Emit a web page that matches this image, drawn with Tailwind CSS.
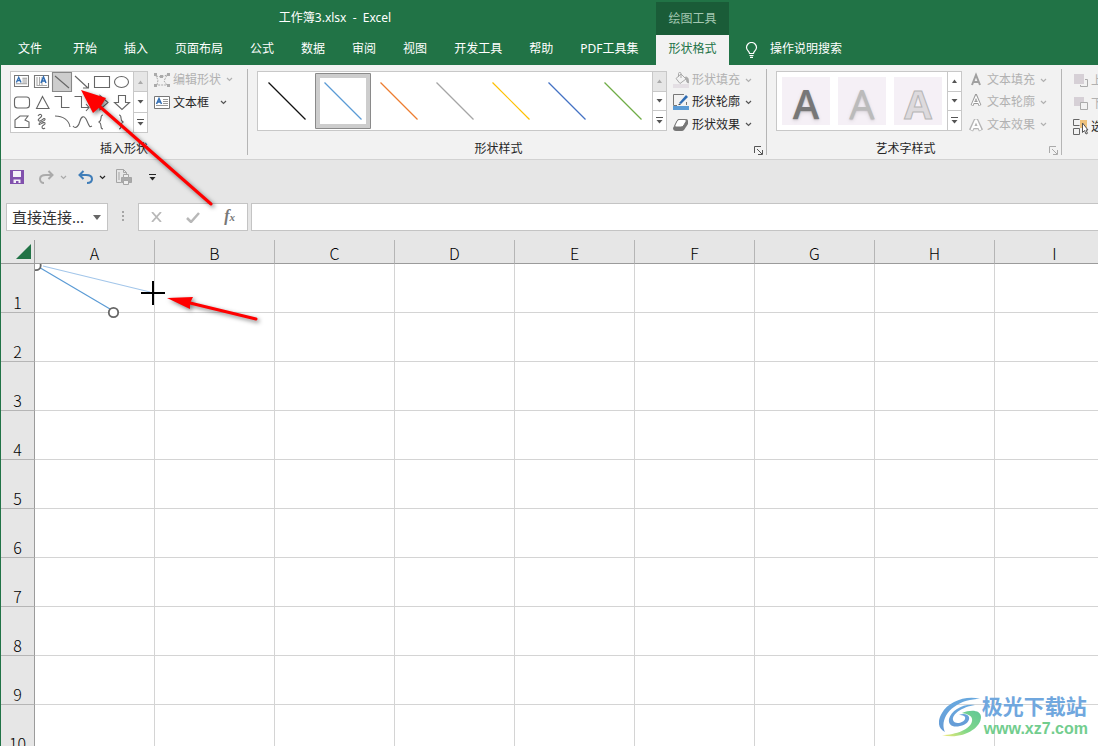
<!DOCTYPE html>
<html lang="zh-CN">
<head>
<meta charset="utf-8">
<meta name="viewport" content="width=device-width, initial-scale=1">
<title>工作簿3.xlsx - Excel</title>
<script src="https://cdn.jsdelivr.net/npm/@tailwindcss/browser@4"></script>
</head>
<body class="relative flex h-screen flex-col overflow-hidden border-l border-[#217346] bg-[#e6e6e6] font-['Noto_Sans','Noto_Sans_CJK_SC',sans-serif] text-xs text-[#262626]">

<!-- shared icons -->
<svg class="hidden" aria-hidden="true">
  <symbol id="chev" viewBox="0 0 7 5"><path d="M1 1l2.500 2.500L6 1" fill="none" stroke="currentColor" stroke-width="1.200"/></symbol>
  <symbol id="up" viewBox="0 0 7 4"><path d="M1 4l2.500-3.500L6 4z" fill="currentColor"/></symbol>
  <symbol id="down" viewBox="0 0 7 4"><path d="M.5 0h6L3.500 3.500z" fill="currentColor"/></symbol>
  <symbol id="more" viewBox="0 0 7 7"><path d="M0 .5h7" stroke="currentColor"/><path d="M.5 3h6L3.500 6.500z" fill="currentColor"/></symbol>
  <symbol id="launch" viewBox="0 0 9 9"><path d="M.5 7V.5H7M3 3l5 5M8.500 4v4.500H4" fill="none" stroke="currentColor"/></symbol>
  <symbol id="textbox" viewBox="0 0 16 14"><path d="M.5 .5h15v12H.5z" fill="#fff" stroke="#777"/><path d="M9 3.500h5M9 5.500h5M9 7.500h5M2 9.500h12" stroke="#999"/><path d="M2.500 8L5 2.500 7.500 8M3.500 6h3" fill="none" stroke="#2f6cb3" stroke-width="1.500"/></symbol>
</svg>

<header class="-ml-px flex h-[65px] shrink-0 bg-[#217346] text-white">
  <div class="flex w-[656px] shrink-0 flex-col">
    <div class="flex h-[35px] items-center justify-center pl-[14px]"><h1 class="whitespace-pre">工作簿3.xlsx  -  Excel</h1></div>
    <nav class="flex h-[28px] items-center gap-[27px] pl-[18px] whitespace-nowrap">
      <button class="mr-1">文件</button><button>开始</button><button>插入</button><button>页面布局</button><button>公式</button><button>数据</button><button>审阅</button><button>视图</button><button>开发工具</button><button>帮助</button><button>PDF工具集</button>
    </nav>
  </div>
  <div class="flex w-[73px] shrink-0 flex-col pt-[2px] text-center">
    <div class="flex h-[33px] items-center justify-center bg-[#1a5c38] text-[#a3c7b2]">绘图工具</div>
    <button class="flex h-[30px] items-center justify-center bg-[#f2f2f2] pb-[2px] text-[#217346]">形状格式</button>
  </div>
  <button class="mt-[35px] ml-4 flex h-[28px] items-center gap-3 whitespace-nowrap">
    <svg class="mt-[2px] h-4 w-[13px]" viewBox="0 0 13 16" fill="none" stroke="#fff" stroke-width="1.200"><path d="M4.500 11.500C4.500 9 1.500 8.500 1.500 5.500a5 5 0 0 1 10 0C11.500 8.500 8.500 9 8.500 11.500zM4.500 13.500h4M5 15.400h3"/></svg>
    操作说明搜索
  </button>
</header>

<section aria-label="形状格式" class="flex h-[95px] shrink-0 overflow-hidden border-b border-[#d2d2d2] bg-[#f2f2f2] pt-1 whitespace-nowrap">
  <!-- insert shapes -->
  <div class="flex h-[86px] w-[247px] shrink-0 flex-col border-r border-[#b5b5b5] pt-[2px] pl-[9px]">
    <div class="flex h-[62px] gap-[6px]">
      <div class="flex w-[138px] border border-[#c8c8c8] bg-white">
        <svg class="h-[60px] w-[122px] shrink-0" viewBox="0 0 122 60" fill="none" stroke="#666" stroke-width="1.100">
          <use href="#textbox" x="3" y="3" width="15" height="13"/>
          <path d="M23.500 3.500h14v12h-14z" stroke="#777"/><path d="M26 5v9M28.500 5v9M31 5v9M26 13.500h10" stroke="#aaa"/><path d="M30 11l2.500-6 2.500 6M31 9h3" stroke="#2f6cb3" stroke-width="1.500"/>
          <path d="M41.500.5h19v19h-19z" fill="#cdcdcd" stroke="#888"/><path d="M44 4l14 12M64 4l13 12M77.500 11v5H72M83.500 4.500h15v11h-15z"/>
          <ellipse cx="110.500" cy="10" rx="7" ry="5.500"/>
          <rect x="3.500" y="25" width="15" height="11" rx="3"/><path d="M31.500 24.500L38 36.500H25.500zM43.500 24.500h7v11h8M63.500 24.500h7v11h8M75 32l3 3.500-3 3.500M83 27.500h6v-4l8 7-8 7v-4h-6zM107.500 23.500h7v7h4l-7.500 7-7.500-7h4z"/>
          <path d="M4 55.500V48l5-4h8l-3 4 4 2v5.500zM27 44c2-3 5-1 3 1s-4 3-2 4 5-4 6-2-6 3-6 5 5-3 6-1-3 2-3 4 2 2 3 1M44 44c8 0 14 4 15 11M62 54c3 4 6-1 7-5s4-7 7 0 3 6 5 5M92 43c-2 0-2 1-2 3s0 3-2 4c2 1 2 2 2 4s0 3 2 3M108 43c2 0 2 1 2 3s0 3 2 4c-2 1-2 2-2 4s0 3-2 3"/>
        </svg>
        <div class="flex w-[14px] shrink-0 flex-col divide-y divide-[#c8c8c8] border-l border-[#c8c8c8] text-[#555]">
          <button aria-label="上移" class="flex flex-1 items-center justify-center bg-[#e6e6e6] text-[#aaa]"><svg class="h-1 w-[7px]"><use href="#up"/></svg></button>
          <button aria-label="下移" class="flex flex-1 items-center justify-center"><svg class="h-1 w-[7px]"><use href="#down"/></svg></button>
          <button aria-label="更多" class="flex flex-1 items-center justify-center"><svg class="h-[7px] w-[7px]"><use href="#more"/></svg></button>
        </div>
      </div>
      <div class="flex flex-col gap-[6px]">
        <button class="flex h-[17px] items-center gap-[3px] text-[#b1b1b1]"><svg class="h-[14px] w-4" viewBox="0 0 16 14" fill="none" stroke="#aaa"><path d="M2 3l5 1 6-2-3 6 3 4H3l1-5z" stroke-dasharray="2 1"/><path d="M0 0h3v3H0zM6 2h3v3H6zM13 0h3v3h-3zM0 11h3v3H0zM13 11h3v3h-3z" fill="#aaa" stroke="none"/></svg>编辑形状<svg class="ml-[2px] h-[5px] w-[7px]"><use href="#chev"/></svg></button>
        <button class="flex h-[17px] items-center gap-[3px]"><svg class="h-[14px] w-4"><use href="#textbox"/></svg>文本框<svg class="ml-2 h-[5px] w-[7px] text-[#555]"><use href="#chev"/></svg></button>
      </div>
    </div>
    <div class="flex h-[22px] items-center justify-center pt-[9px] pr-[9px]">插入形状</div>
  </div>

  <!-- shape styles -->
  <div class="flex h-[86px] w-[519px] shrink-0 flex-col border-r border-[#b5b5b5] pt-[2px] pl-[9px]">
    <div class="flex h-[62px] gap-[6px]">
      <div class="flex h-[60px] w-[410px] border border-[#c8c8c8] bg-white">
        <svg class="h-[58px] w-[394px] shrink-0" viewBox="0 0 394 58" fill="none" stroke-width="1.200">
          <path d="M60 4h50v50H60z" stroke="#cdcdcd" stroke-width="4"/><path d="M57.500 1.500h55v55h-55z" stroke="#8a8a8a" stroke-width="1"/>
          <path d="M10.500 10.500l37 37" stroke="#111"/><path d="M66.500 10.500l37 37" stroke="#5b9bd5"/><path d="M122.500 10.500l37 37" stroke="#ed7d31"/><path d="M178.500 10.500l37 37" stroke="#a5a5a5"/><path d="M234.500 10.500l37 37" stroke="#ffc000"/><path d="M290.500 10.500l37 37" stroke="#4472c4"/><path d="M346.500 10.500l37 37" stroke="#70ad47"/>
        </svg>
        <div class="flex w-[14px] shrink-0 flex-col divide-y divide-[#c8c8c8] border-l border-[#c8c8c8] text-[#555]">
          <button aria-label="上移" class="flex flex-1 items-center justify-center bg-[#e6e6e6] text-[#aaa]"><svg class="h-1 w-[7px]"><use href="#up"/></svg></button>
          <button aria-label="下移" class="flex flex-1 items-center justify-center"><svg class="h-1 w-[7px]"><use href="#down"/></svg></button>
          <button aria-label="更多" class="flex flex-1 items-center justify-center"><svg class="h-[7px] w-[7px]"><use href="#more"/></svg></button>
        </div>
      </div>
      <div class="flex flex-col gap-[6px] pt-px">
        <button class="flex h-[17px] items-center gap-[3px] text-[#b1b1b1]"><svg class="h-4 w-4" viewBox="0 0 16 16" fill="none" stroke="#aaa"><path d="M8 2l5 5-6 4.500-4-5zM5.500 5V1.500C5.500 0 8 0 8 1.500V6"/><path d="M12.500 5c3 0 3 3 3 6-2 0-2-3-2-3z" fill="#aaa"/><path d="M0 12h16v4H0z" fill="#e4dfe4" stroke="none"/></svg>形状填充<svg class="ml-[2px] h-[5px] w-[7px]"><use href="#chev"/></svg></button>
        <button class="flex h-[17px] items-center gap-[3px]"><svg class="h-4 w-4" viewBox="0 0 16 16" fill="none"><path d="M11 .5H.5v11H4M13.500 8v3" stroke="#777"/><path d="M6 9l7-8 2 2-7 7z" fill="#2f6cb3"/><path d="M5 11l1.500-1.500L8 11z" fill="#444"/><path d="M0 12h16v4H0z" fill="#5b9bd5"/></svg>形状轮廓<svg class="ml-[2px] h-[5px] w-[7px] text-[#555]"><use href="#chev"/></svg></button>
        <button class="flex h-[17px] items-center gap-[3px]"><svg class="h-4 w-4" viewBox="0 0 16 16"><path d="M5 2h8q2 0 2 2v3l-4 6q-1 1-2 1H3q-3 0-3-3z" fill="#777"/><path d="M6 2.500h6q2 0 1 2L11 8q-1 2-3 2H3Q1 10 2 8l2-4q1-1.500 2-1.500z" fill="#fff" stroke="#777"/></svg>形状效果<svg class="ml-[2px] h-[5px] w-[7px] text-[#555]"><use href="#chev"/></svg></button>
      </div>
    </div>
    <div class="flex h-[22px] items-center pt-[9px] pr-[3px]"><span class="flex-1 pr-[14px] text-center">形状样式</span><button aria-label="形状样式选项"><svg class="mt-1 h-[9px] w-[9px] text-[#555]"><use href="#launch"/></svg></button></div>
  </div>

  <!-- WordArt styles -->
  <div class="flex h-[86px] w-[295px] shrink-0 flex-col border-r border-[#b5b5b5] pt-[2px] pl-[9px]">
    <div class="flex h-[62px] gap-[6px]">
      <div class="flex h-[60px] w-[186px] border border-[#c8c8c8] bg-white">
        <div class="flex w-[170px] shrink-0 items-center gap-2 pl-[5px] font-['Open_Sans',sans-serif] text-[40px] leading-[48px]">
          <button class="h-12 w-12 bg-[#f5f0f6] pt-[3px] font-semibold text-[#777] text-shadow-md">A</button>
          <button class="h-12 w-12 bg-[#f5f0f6] pt-[3px] text-[#bbb] text-shadow-md">A</button>
          <button class="h-12 w-12 bg-[#f5f0f6] pt-[3px] font-bold text-[#dddadd] [-webkit-text-stroke:1px_#b5b5b5]">A</button>
        </div>
        <div class="flex w-[14px] shrink-0 flex-col divide-y divide-[#c8c8c8] border-l border-[#c8c8c8] text-[#555]">
          <button aria-label="上移" class="flex flex-1 items-center justify-center"><svg class="h-1 w-[7px]"><use href="#up"/></svg></button>
          <button aria-label="下移" class="flex flex-1 items-center justify-center"><svg class="h-1 w-[7px]"><use href="#down"/></svg></button>
          <button aria-label="更多" class="flex flex-1 items-center justify-center"><svg class="h-[7px] w-[7px]"><use href="#more"/></svg></button>
        </div>
      </div>
      <div class="flex flex-col gap-[6px] pt-px text-[#b1b1b1]">
        <button class="flex h-[17px] items-center gap-[3px]"><svg class="h-4 w-4" viewBox="0 0 16 16"><path d="M4 13L8 3l4 10M5.500 10h5" fill="none" stroke="#a0a0a0" stroke-width="2"/></svg>文本填充<svg class="ml-[2px] h-[5px] w-[7px]"><use href="#chev"/></svg></button>
        <button class="flex h-[17px] items-center gap-[3px]"><svg class="h-4 w-4" viewBox="0 0 16 16"><path d="M4 11.500L8 2l4 9.500M5.500 8.500h5" fill="none" stroke="#999" stroke-width="3"/><path d="M4.200 11L8 2.500l3.800 8.500M5.500 8.500h5" fill="none" stroke="#fff" stroke-width="1.200"/></svg>文本轮廓<svg class="ml-[2px] h-[5px] w-[7px]"><use href="#chev"/></svg></button>
        <button class="flex h-[17px] items-center gap-[3px]"><svg class="h-4 w-4" viewBox="0 0 16 16" stroke-linejoin="bevel"><path d="M3 13.500L8 3l5 10.500M5.500 10h5" fill="none" stroke="#b5b5b5" stroke-width="4.500"/><path d="M3.500 13L8 3l4.500 10M5.500 10h5" fill="none" stroke="#fff" stroke-width="2"/></svg>文本效果<svg class="ml-[2px] h-[5px] w-[7px]"><use href="#chev"/></svg></button>
      </div>
    </div>
    <div class="flex h-[22px] items-center pt-[9px] pr-[3px]"><span class="flex-1 pr-[14px] text-center">艺术字样式</span><button aria-label="艺术字样式选项"><svg class="mt-1 h-[9px] w-[9px] text-[#aaa]"><use href="#launch"/></svg></button></div>
  </div>

  <!-- arrange -->
  <div class="flex shrink-0 flex-col gap-[6px] pt-[3px] pl-[11px]">
    <button class="flex h-[17px] items-center gap-[2px] text-[#b1b1b1]"><svg class="h-4 w-4" viewBox="0 0 16 16"><path d="M1 1h10v10H1z" fill="#d6d0d6"/><path d="M12 6.500h2.500v7h-7V12" fill="none" stroke="#aaa"/></svg>上移一层</button>
    <button class="flex h-[17px] items-center gap-[2px] text-[#b1b1b1]"><svg class="h-4 w-4" viewBox="0 0 16 16"><path d="M1 1h10v9H1z" fill="#d6d0d6"/><path d="M7.500 6.500h7v7h-7z" fill="#f2f2f2" stroke="#aaa"/></svg>下移一层</button>
    <button class="flex h-[17px] items-center gap-[2px]"><svg class="h-4 w-4" viewBox="0 0 16 16"><path d="M7 1h7v8H7z" fill="#efc27c"/><path d="M6.500.5h-6v6h6M.5 9.500h6v6h-6z" fill="none" stroke="#666"/><path d="M9.500 4v9.500l2-2 1.500 3.500 1.500-.7-1.500-3.300H15z" fill="#fff" stroke="#555"/></svg>选择窗格</button>
  </div>
</section>

<!-- quick access toolbar -->
<div class="flex h-[34px] shrink-0 items-center pl-[9px]">
  <button aria-label="保存"><svg class="h-[14px] w-[14px]" viewBox="0 0 14 14"><path d="M0 0h14v14H0z" fill="#8151ad"/><path d="M3 1h8v6H3zM3.500 9.500h7V13h-2v-2H6v2H3.500z" fill="#f4f0f8"/></svg></button>
  <button aria-label="恢复" class="ml-[15px] flex items-center gap-[6px] text-[#aaa]"><svg class="h-[14px] w-[15px]" viewBox="0 0 15 14" fill="none" stroke="currentColor" stroke-width="2"><path d="M13 5H7C3 5 1 7 1 9s1.500 4 4 4M9.500 1l4 4-4 4"/></svg><svg class="h-[5px] w-[7px]"><use href="#chev"/></svg></button>
  <button aria-label="撤消" class="ml-[11px] flex items-center gap-[6px]"><svg class="h-[14px] w-[15px] text-[#3f7db8]" viewBox="0 0 15 14" fill="none" stroke="currentColor" stroke-width="2"><path d="M2 5h6c4 0 6 2 6 4s-1.500 4-5 4M5.500 1l-4 4 4 4"/></svg><svg class="h-[5px] w-[7px]"><use href="#chev"/></svg></button>
  <button aria-label="打印预览" class="ml-[10px]"><svg class="h-4 w-[17px]" viewBox="0 0 17 16" fill="none" stroke="#a5a5a5"><path d="M5 13.500H.5V.5h7l3 3V5M7.500.5v3h3M3 3v8"/><path d="M5.500 8.500h10v5h-10z" fill="#aaa"/><path d="M7.500 5.500h5v3h-5zM7.500 11.500h5v4h-5z" fill="#eee"/></svg></button>
  <button aria-label="自定义快速访问工具栏" class="ml-4"><svg class="h-[7px] w-[7px]"><use href="#more"/></svg></button>
</div>

<!-- formula bar -->
<div class="mt-[9px] flex h-[28px] shrink-0">
  <div class="ml-[5px] flex w-[102px] items-center border border-[#c4c4c4] bg-white pr-[6px]">
    <input aria-label="名称框" value="直接连接..." class="w-full min-w-0 flex-1 bg-transparent pl-[5px] text-[15px] text-[#333] outline-none">
    <button aria-label="名称列表"><svg class="h-[5px] w-2 text-[#666]" viewBox="0 0 8 5"><path d="M0 0h8L4 5z" fill="currentColor"/></svg></button>
  </div>
  <svg class="mx-[14px] h-[28px] w-[2px]" viewBox="0 0 2 28"><path d="M0 8h2v2H0zM0 12h2v2H0zM0 16h2v2H0z" fill="#a5a5a5"/></svg>
  <div class="flex w-[110px] items-center justify-between border border-[#c4c4c4] bg-white px-3">
    <button aria-label="取消"><svg class="h-[10px] w-[11px]" viewBox="0 0 11 10"><path d="M1 0l9 10M10 0L1 10" stroke="#b8b8b8" stroke-width="1.800"/></svg></button>
    <button aria-label="输入"><svg class="h-[11px] w-[14px]" viewBox="0 0 14 11"><path d="M1 6l4 4 8-9" fill="none" stroke="#b8b8b8" stroke-width="2.500"/></svg></button>
    <button aria-label="插入函数" class="pb-[2px] font-['Liberation_Serif',serif] text-base leading-5 font-bold text-[#777] italic">f<span class="text-[11px]">x</span></button>
  </div>
  <input aria-label="编辑栏" class="ml-[3px] min-w-0 flex-1 border border-r-0 border-[#c4c4c4] bg-white outline-none">
</div>

<!-- worksheet -->
<main class="relative mt-[9px] flex-1 overflow-hidden bg-white">
  <table class="w-[1114px] table-fixed border-separate border-spacing-0 font-['Noto_Sans_CJK_SC',sans-serif] text-base leading-5 text-black">
    <thead>
      <tr id="columns" class="h-6 bg-[#e6e6e6]">
        <th class="h-6 w-[34px] border-r border-b border-[#9b9b9b] p-0"><button aria-label="全选" class="block pl-[15px]"><svg class="h-[15px] w-[15px]" viewBox="0 0 15 15"><path d="M15 0v15H0z" fill="#217346"/></svg></button></th>
      </tr>
    </thead>
    <tbody id="rows"></tbody>
  </table>

  <!-- connectors drawn on the sheet -->
  <svg class="pointer-events-none absolute top-6 left-[34px] h-[70px] w-[150px]" viewBox="35 264 150 70" fill="none">
    <path d="M37 266L110 309" stroke="#5b9bd5" stroke-width="1.200"/><path d="M43 266L150 292" stroke="#a3c6ea" stroke-width="1.200"/>
    <circle cx="36" cy="265.500" r="4.700" fill="#fff" stroke="#666" stroke-width="1.800"/><circle cx="113.500" cy="312.500" r="4.700" fill="#fff" stroke="#666" stroke-width="1.800"/>
    <path d="M141 293h24M153 281v24" stroke="#000" stroke-width="2"/>
  </svg>
</main>

<!-- annotation arrows -->
<svg class="pointer-events-none absolute top-0 -left-px h-[340px] w-[280px] drop-shadow-[2px_2px_2px_rgba(0,0,0,0.5)]" viewBox="0 0 280 340" fill="#f00" stroke="#f00" stroke-linecap="round" aria-hidden="true">
  <path d="M98 105L211 204M190 303L256 319" stroke-width="3"/><path d="M81 90l25 8-5 8-8 7zM167 298l26-1-3 6v6z" stroke="none"/>
</svg>

<!-- site watermark -->
<div class="pointer-events-none absolute right-[10px] bottom-[7px] flex items-center whitespace-nowrap">
  <svg class="h-[42px] w-[43px]" viewBox="0 0 43 42" aria-hidden="true">
    <defs><linearGradient id="g1" x1="0" y1="0" x2="0" y2="1"><stop stop-color="#69a9df"/><stop offset="1" stop-color="#659bd6"/></linearGradient><linearGradient id="g2" x1="1" y1="0" x2="0" y2="1"><stop stop-color="#60c796"/><stop offset=".6" stop-color="#83d889"/><stop offset="1" stop-color="#f4ea76"/></linearGradient></defs>
    <path d="M41 3C27-1 9 6 3 17c-5 8-4 16 3 19-4-8 0-19 9-25C23 5 32 3 41 3z" fill="url(#g1)"/>
    <path d="M36 9C25 7 12 14 10 23c-1 6 4 9 11 7 6-1 10-5 9-9-1-3-6-4-10-2 4 0 7 1 6 4-1 4-11 6-12 1-1-6 9-13 22-15z" fill="url(#g1)"/>
    <path d="M23 17c9-4 19-3 19 4C42 33 22 44 3 39c14 0 29-6 30-14 1-5-4-7-10-8z" fill="url(#g2)"/>
  </svg>
  <div class="font-['Liberation_Sans','Noto_Sans_CJK_SC',sans-serif] font-bold">
    <div class="text-[21px] leading-6 text-[#70a7de]">极光下载站</div>
    <div class="pl-[2px] text-base leading-5 text-[#72cd8e]">www.xz7.com</div>
  </div>
</div>

<script>
  const columns = document.getElementById('columns');
  for (const name of 'ABCDEFGHI') {
    columns.insertAdjacentHTML('beforeend', `<th scope="col" class="h-6 border-r border-b border-r-[#b5b5b5] border-b-[#9b9b9b] p-0 pt-[2px] font-light">${name}</th>`);
  }
  const rows = document.getElementById('rows');
  for (let n = 1; n <= 10; n++) {
    rows.insertAdjacentHTML('beforeend', `<tr><th scope="row" class="h-[49px] border-r border-b border-r-[#9b9b9b] border-b-[#b5b5b5] bg-[#e6e6e6] p-0 align-bottom font-light">${n}</th>${'<td class="border-r border-b border-[#d4d4d4] p-0"></td>'.repeat(9)}</tr>`);
  }
</script>
</body>
</html>
